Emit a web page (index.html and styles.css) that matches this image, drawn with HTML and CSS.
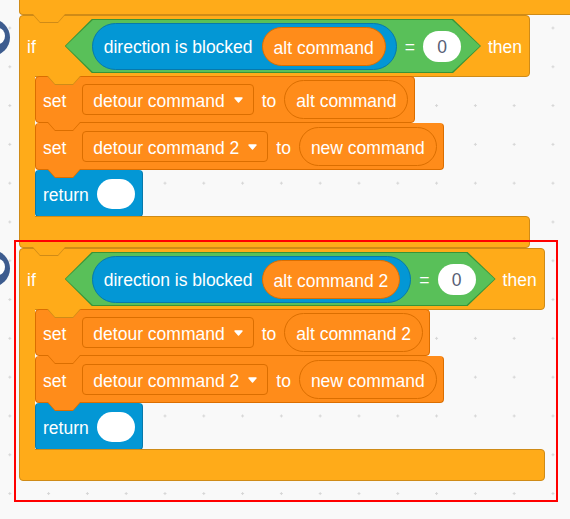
FILE: index.html
```html
<!DOCTYPE html>
<html lang="en">
<head>
<meta charset="UTF-8" />
<title>Scratch blocks</title>
<link rel="stylesheet" href="styles.css">
</head>
<body>

<div class="workspace">
  <div class="stack">
    <!-- bottom of the block above, cut off by the viewport -->
    <div class="cap control tab"></div>

    <div class="c-block">
      <div class="c-head control tab">
        <span class="label if-label">if</span>
        <div class="bool">
          <div class="reporter custom">
            <span class="label">direction is blocked</span>
            <span class="pill variable">alt command</span>
          </div>
          <span class="label">=</span>
          <span class="oval">0</span>
        </div>
        <span class="label">then</span>
      </div>
      <div class="c-body">
        <div class="c-arm control"></div>
        <div class="c-inner">
          <div class="stmt variable tab">
            <span class="label set-label">set</span>
            <span class="dropdown">detour command
              <svg width="9" height="6" viewBox="0 0 9 6"><path d="M1 1h7L4.5 5z" fill="#fff" stroke="#fff" stroke-width="1.4" stroke-linejoin="round"/></svg>
            </span>
            <span class="label">to</span>
            <span class="pill variable">alt command</span>
          </div>
          <div class="stmt variable tab">
            <span class="label set-label">set</span>
            <span class="dropdown">detour command 2
              <svg width="9" height="6" viewBox="0 0 9 6"><path d="M1 1h7L4.5 5z" fill="#fff" stroke="#fff" stroke-width="1.4" stroke-linejoin="round"/></svg>
            </span>
            <span class="label">to</span>
            <span class="pill variable">new command</span>
          </div>
          <div class="stmt custom">
            <span class="label">return</span>
            <span class="oval slot"></span>
          </div>
        </div>
      </div>
      <div class="c-foot control tab"></div>
    </div>

    <div class="c-block">
      <div class="c-head control tab">
        <span class="label if-label">if</span>
        <div class="bool">
          <div class="reporter custom">
            <span class="label">direction is blocked</span>
            <span class="pill variable">alt command 2</span>
          </div>
          <span class="label">=</span>
          <span class="oval">0</span>
        </div>
        <span class="label">then</span>
      </div>
      <div class="c-body">
        <div class="c-arm control"></div>
        <div class="c-inner">
          <div class="stmt variable tab">
            <span class="label set-label">set</span>
            <span class="dropdown">detour command
              <svg width="9" height="6" viewBox="0 0 9 6"><path d="M1 1h7L4.5 5z" fill="#fff" stroke="#fff" stroke-width="1.4" stroke-linejoin="round"/></svg>
            </span>
            <span class="label">to</span>
            <span class="pill variable">alt command 2</span>
          </div>
          <div class="stmt variable tab">
            <span class="label set-label">set</span>
            <span class="dropdown">detour command 2
              <svg width="9" height="6" viewBox="0 0 9 6"><path d="M1 1h7L4.5 5z" fill="#fff" stroke="#fff" stroke-width="1.4" stroke-linejoin="round"/></svg>
            </span>
            <span class="label">to</span>
            <span class="pill variable">new command</span>
          </div>
          <div class="stmt custom">
            <span class="label">return</span>
            <span class="oval slot"></span>
          </div>
        </div>
      </div>
      <div class="c-foot control"></div>
    </div>
  </div>

  <!-- bubbles sticking out from the left edge -->
  <span class="bubble bubble-1"></span>
  <span class="bubble bubble-2"></span>

  <!-- selection highlight -->
  <div class="highlight"></div>
</div>

</body>
</html>
```

FILE: styles.css
```css
/* Reset and base */
* {
  box-sizing: border-box;
  margin: 0;
  padding: 0;
}
body {
  font-family: 'Liberation Sans', Arial, Helvetica, sans-serif;
  font-size: 17.5px;
  color: #fff;
  background: #f9f9f9;
  overflow: hidden;
}

/* Workspace with dotted grid */
.workspace {
  position: relative;
  width: 570px;
  height: 519px;
  overflow: hidden;
  background-color: #f9f9f9;
  background-image: radial-gradient(circle, #d6d6d6 1px, transparent 1.4px);
  background-size: 38.8px 38.8px;
  background-position: -9.6px 8.6px;
}

.stack {
  display: flex;
  flex-direction: column;
  align-items: flex-start;
  padding-left: 19px;
}

/* Category colours */
.control {
  --fill: #ffab19;
  --line: #cf8b17;
  background: var(--fill);
  border-color: var(--line);
}
.variable {
  --fill: #ff8c1a;
  --line: #db6e00;
  background: var(--fill);
  border-color: var(--line);
}
.custom {
  --fill: #0397d5;
  --line: #0779ab;
  background: var(--fill);
  border-color: var(--line);
}

/* text sits a bit low in the blocks, hence the top padding */
.label {
  white-space: nowrap;
  line-height: 1;
  padding-top: 4px;
}

/* Tab under a block that fits the notch of the next one */
.tab {
  position: relative;
}
.tab::before,
.tab::after {
  content: '';
  position: absolute;
  top: 100%;
  z-index: 3;
}
.tab::before {
  left: calc(var(--tab-x) - 1px);
  width: 34px;
  height: 9px;
  background: var(--line);
  clip-path: polygon(0 0, 34px 0, 26px 9px, 8px 9px);
}
.tab::after {
  left: var(--tab-x);
  width: 32px;
  height: 8px;
  background: var(--fill);
  clip-path: polygon(0 0, 32px 0, 25px 8px, 7px 8px);
}

/* Previous block, cut by the top edge */
.cap {
  --tab-x: 13px;
  width: 600px;
  height: 15px;
  border-style: solid;
  border-width: 0 0 1px 1px;
  border-bottom-left-radius: 4px;
}

/* C shaped "if" block */
.c-block {
  display: flex;
  flex-direction: column;
}
.c-head {
  --tab-x: 28px;
  display: flex;
  align-items: center;
  height: 62px;
  padding: 0 7px;
  border: 1px solid;
  border-color: var(--line);
  border-radius: 4px 4px 4px 0;
}
.if-label {
  margin-right: 29px;
}
.c-body {
  display: flex;
  margin: -1px 0;
}
.c-arm {
  position: relative;
  z-index: 1;
  width: 16px;
  border-left: 1px solid;
  border-color: var(--line);
}
.c-inner {
  display: flex;
  flex-direction: column;
  align-items: flex-start;
}
.c-foot {
  --tab-x: 13px;
  position: relative;
  height: 32px;
  border: 1px solid;
  border-color: var(--line);
  border-radius: 0 4px 4px 4px;
}

/* Boolean hexagon */
.bool {
  position: relative;
  z-index: 0;
  display: flex;
  align-items: center;
  gap: 8px;
  height: 54px;
  padding: 0 20px 0 27px;
  margin-right: 7px;
}
.bool::before,
.bool::after {
  content: '';
  position: absolute;
  z-index: -1;
  clip-path: polygon(27px 0, calc(100% - 28px) 0, 100% 50%, calc(100% - 28px) 100%, 27px 100%, 0 50%);
}
.bool::before {
  inset: 0;
  background: #389438;
}
.bool::after {
  inset: 1px;
  background: #59c059;
}

/* Round reporter */
.reporter {
  display: flex;
  align-items: center;
  gap: 9px;
  height: 47px;
  padding: 0 10px 0 11px;
  border: 1px solid;
  border-color: var(--line);
  border-radius: 24px;
}
.pill {
  display: flex;
  align-items: center;
  height: 39px;
  padding: 4px 11px 0;
  border: 1px solid;
  border-color: var(--line);
  border-radius: 20px;
  white-space: nowrap;
}
.oval {
  display: flex;
  align-items: center;
  justify-content: center;
  width: 38px;
  height: 31px;
  padding-top: 3px;
  border-radius: 16px;
  background: #fff;
  color: #575e75;
}
.oval.slot {
  height: 30px;
  border-radius: 15px;
}

/* Stack blocks */
.stmt {
  --tab-x: 12px;
  position: relative;
  display: flex;
  align-items: center;
  gap: 8px;
  height: 47px;
  padding: 0 6px 0 7px;
  border: 1px solid;
  border-color: var(--line);
  border-radius: 4px;
}
.stmt + .stmt {
  border-top-color: transparent;
}
.stmt.custom {
  padding-right: 7px;
}
.set-label {
  margin-right: 8px;
}
.dropdown {
  display: flex;
  align-items: center;
  gap: 9px;
  height: 31px;
  padding: 4px 10px 0;
  border: 1px solid #db6e00;
  border-radius: 4px;
  background: #ff8c1a;
  white-space: nowrap;
}
.dropdown svg {
  display: block;
  margin-top: -3px;
}

/* Bubbles on the left edge */
.bubble {
  position: absolute;
  left: -27px;
  width: 37px;
  height: 37px;
  border-radius: 50%;
  background: #3d5c8f;
}
.bubble::after {
  content: '';
  position: absolute;
  right: 5px;
  top: 9px;
  width: 14px;
  height: 16px;
  border-radius: 50%;
  background: #fff;
}
.bubble-1 {
  top: 19px;
}
.bubble-2 {
  top: 250px;
}

/* Red selection frame */
.highlight {
  position: absolute;
  left: 14px;
  top: 240px;
  width: 544px;
  height: 262px;
  border: 2px solid #ff0000;
  z-index: 10;
}
```
